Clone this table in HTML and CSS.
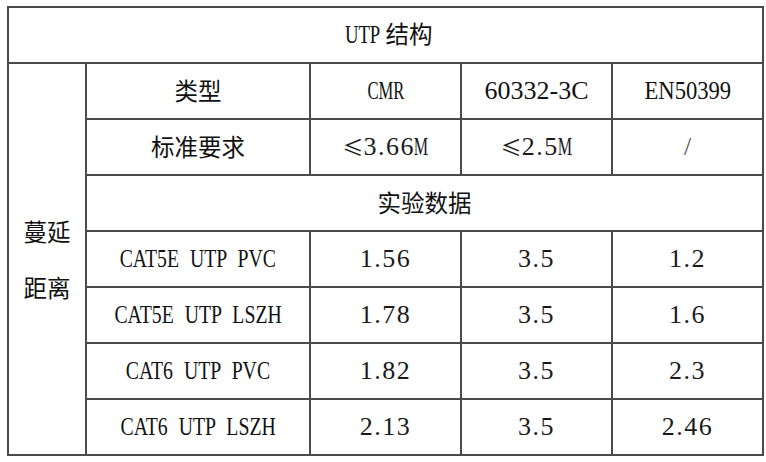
FILE: index.html
```html
<!DOCTYPE html>
<html lang="zh-CN">
  <head>
    <meta charset="UTF-8" />
    <title>UTP结构</title>
    <link rel="stylesheet" href="styles.css">
  </head>
  <body>
    <table class="spec-table">
      <colgroup>
        <col class="c-side" />
        <col class="c-name" />
        <col class="c-val" />
        <col class="c-val" />
        <col class="c-val" />
      </colgroup>
      <tr>
        <td colspan="5"><span class="narrow title">UTP</span><span class="cn">结构</span></td>
      </tr>
      <tr>
        <td rowspan="7" class="cn side">蔓延<br />距离</td>
        <td class="cn">类型</td>
        <td><span class="narrow tight">CMR</span></td>
        <td>60332-3C</td>
        <td><span class="narrow en">EN50399</span></td>
      </tr>
      <tr>
        <td class="cn">标准要求</td>
        <td class="num"><span class="le">≤</span>3.66<span class="narrow m">M</span></td>
        <td class="num"><span class="le">≤</span>2.5<span class="narrow m">M</span></td>
        <td class="slash">/</td>
      </tr>
      <tr>
        <td colspan="4" class="cn">实验数据</td>
      </tr>
      <!-- 实验数据 -->
      <tr>
        <td><span class="narrow name">CAT5E UTP PVC</span></td>
        <td class="num">1.56</td>
        <td class="num">3.5</td>
        <td class="num">1.2</td>
      </tr>
      <tr>
        <td><span class="narrow name">CAT5E UTP LSZH</span></td>
        <td class="num">1.78</td>
        <td class="num">3.5</td>
        <td class="num">1.6</td>
      </tr>
      <tr>
        <td><span class="narrow name">CAT6 UTP PVC</span></td>
        <td class="num">1.82</td>
        <td class="num">3.5</td>
        <td class="num">2.3</td>
      </tr>
      <tr>
        <td><span class="narrow name">CAT6 UTP LSZH</span></td>
        <td class="num">2.13</td>
        <td class="num">3.5</td>
        <td class="num">2.46</td>
      </tr>
    </table>
  </body>
</html>
```

FILE: styles.css
```css
body {
  margin: 0;
  background-color: #fff;
  font-family: "Liberation Serif", "Noto Sans CJK SC", serif;
  color: #111;
}

.spec-table {
  margin: 6px 0 0 7px;
  border-collapse: collapse;
  table-layout: fixed;
  width: 757px;
}

.c-side {
  width: 78px;
}

.c-name {
  width: 224px;
}

.c-val {
  width: 151px;
}

.spec-table td {
  border: 2px solid #4a4a4a;
  height: 54px;
  padding: 0;
  text-align: center;
  vertical-align: middle;
  font-size: 26px;
  line-height: 1;
}

.spec-table .cn,
.spec-table td .cn {
  font-family: "Noto Sans CJK SC", sans-serif;
  font-size: 23.5px;
}

.spec-table .side {
  line-height: 56px;
}

/* SimSun-like half width latin */
.narrow {
  display: inline-block;
  transform: scaleX(0.76);
}

.narrow.title {
  transform: scaleX(0.72);
  margin-right: -2px;
}

.narrow.tight {
  transform: scaleX(0.64);
}

.narrow.en {
  transform: scaleX(0.87);
}

.narrow.m {
  transform: scaleX(0.62);
  margin: 0 -5px 0 -6px;
}

.name {
  word-spacing: 8px;
}

.num {
  letter-spacing: 1.5px;
  color: #1a1a1a;
}

.le {
  font-family: "Noto Sans CJK SC", sans-serif;
  font-size: 21px;
  letter-spacing: 0;
}

.slash {
  color: #555;
  font-size: 22px;
}
```
